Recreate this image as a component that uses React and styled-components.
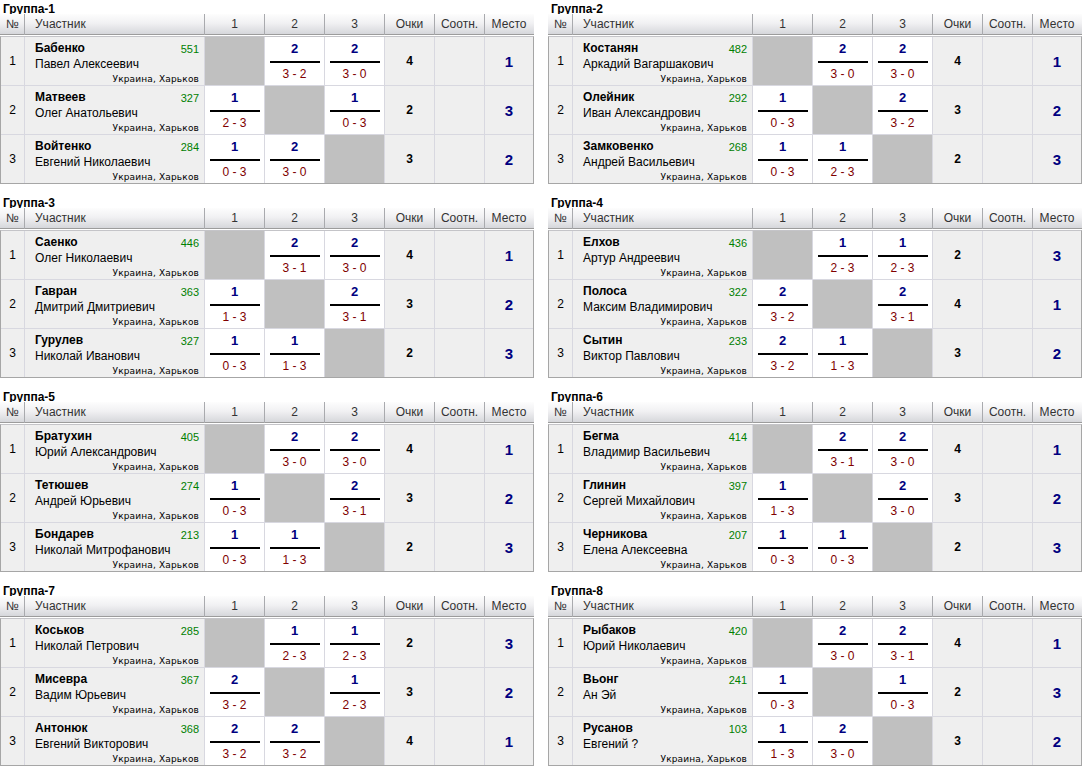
import React from 'react'
import styled, { createGlobalStyle } from 'styled-components'

const GlobalStyle = createGlobalStyle`
  body {
    margin: 0;
    background: #fff;
    font-family: "Liberation Sans", Arial, sans-serif;
    font-size: 12px;
    color: #000;
  }
`

const groups = [
  {
    title: 'Группа-1',
    rows: [
      { last: 'Бабенко', first: 'Павел Алексеевич', rating: 551, games: [null, [2, '3 - 2'], [2, '3 - 0']], points: 4, place: 1 },
      { last: 'Матвеев', first: 'Олег Анатольевич', rating: 327, games: [[1, '2 - 3'], null, [1, '0 - 3']], points: 2, place: 3 },
      { last: 'Войтенко', first: 'Евгений Николаевич', rating: 284, games: [[1, '0 - 3'], [2, '3 - 0'], null], points: 3, place: 2 },
    ],
  },
  {
    title: 'Группа-2',
    rows: [
      { last: 'Костанян', first: 'Аркадий Вагаршакович', rating: 482, games: [null, [2, '3 - 0'], [2, '3 - 0']], points: 4, place: 1 },
      { last: 'Олейник', first: 'Иван Александрович', rating: 292, games: [[1, '0 - 3'], null, [2, '3 - 2']], points: 3, place: 2 },
      { last: 'Замковенко', first: 'Андрей Васильевич', rating: 268, games: [[1, '0 - 3'], [1, '2 - 3'], null], points: 2, place: 3 },
    ],
  },
  {
    title: 'Группа-3',
    rows: [
      { last: 'Саенко', first: 'Олег Николаевич', rating: 446, games: [null, [2, '3 - 1'], [2, '3 - 0']], points: 4, place: 1 },
      { last: 'Гавран', first: 'Дмитрий Дмитриевич', rating: 363, games: [[1, '1 - 3'], null, [2, '3 - 1']], points: 3, place: 2 },
      { last: 'Гурулев', first: 'Николай Иванович', rating: 327, games: [[1, '0 - 3'], [1, '1 - 3'], null], points: 2, place: 3 },
    ],
  },
  {
    title: 'Группа-4',
    rows: [
      { last: 'Елхов', first: 'Артур Андреевич', rating: 436, games: [null, [1, '2 - 3'], [1, '2 - 3']], points: 2, place: 3 },
      { last: 'Полоса', first: 'Максим Владимирович', rating: 322, games: [[2, '3 - 2'], null, [2, '3 - 1']], points: 4, place: 1 },
      { last: 'Сытин', first: 'Виктор Павлович', rating: 233, games: [[2, '3 - 2'], [1, '1 - 3'], null], points: 3, place: 2 },
    ],
  },
  {
    title: 'Группа-5',
    rows: [
      { last: 'Братухин', first: 'Юрий Александрович', rating: 405, games: [null, [2, '3 - 0'], [2, '3 - 0']], points: 4, place: 1 },
      { last: 'Тетюшев', first: 'Андрей Юрьевич', rating: 274, games: [[1, '0 - 3'], null, [2, '3 - 1']], points: 3, place: 2 },
      { last: 'Бондарев', first: 'Николай Митрофанович', rating: 213, games: [[1, '0 - 3'], [1, '1 - 3'], null], points: 2, place: 3 },
    ],
  },
  {
    title: 'Группа-6',
    rows: [
      { last: 'Бегма', first: 'Владимир Васильевич', rating: 414, games: [null, [2, '3 - 1'], [2, '3 - 0']], points: 4, place: 1 },
      { last: 'Глинин', first: 'Сергей Михайлович', rating: 397, games: [[1, '1 - 3'], null, [2, '3 - 0']], points: 3, place: 2 },
      { last: 'Черникова', first: 'Елена Алексеевна', rating: 207, games: [[1, '0 - 3'], [1, '0 - 3'], null], points: 2, place: 3 },
    ],
  },
  {
    title: 'Группа-7',
    rows: [
      { last: 'Коськов', first: 'Николай Петрович', rating: 285, games: [null, [1, '2 - 3'], [1, '2 - 3']], points: 2, place: 3 },
      { last: 'Мисевра', first: 'Вадим Юрьевич', rating: 367, games: [[2, '3 - 2'], null, [1, '2 - 3']], points: 3, place: 2 },
      { last: 'Антонюк', first: 'Евгений Викторович', rating: 368, games: [[2, '3 - 2'], [2, '3 - 2'], null], points: 4, place: 1 },
    ],
  },
  {
    title: 'Группа-8',
    rows: [
      { last: 'Рыбаков', first: 'Юрий Николаевич', rating: 420, games: [null, [2, '3 - 0'], [2, '3 - 1']], points: 4, place: 1 },
      { last: 'Вьонг', first: 'Ан Эй', rating: 241, games: [[1, '0 - 3'], null, [1, '0 - 3']], points: 2, place: 3 },
      { last: 'Русанов', first: 'Евгений ?', rating: 103, games: [[1, '1 - 3'], [2, '3 - 0'], null], points: 3, place: 2 },
    ],
  },
]

const COLS = '24px 180px 60px 60px 60px 50px 50px 48px'

const Page = styled.div`
  display: grid;
  grid-template-columns: 534px 534px;
  column-gap: 14px;
  row-gap: 10px;
`

const Group = styled.section`
  display: flex;
  flex-direction: column;
`

const Title = styled.div`
  box-sizing: border-box;
  height: 14px;
  padding: 2px 0 0 3px;
  line-height: 14px;
  font-weight: bold;
  font-size: 12px;
`

const HeaderRow = styled.div`
  display: grid;
  grid-template-columns: ${COLS};
  height: 20px;
  padding: 0 1px;
  border-bottom: 1px solid #9c9c9c;
  background: linear-gradient(#fdfdfd, #f1f1f3 45%, #d6d7db);
  margin-bottom: 1px;
`

const HeadCell = styled.div`
  box-sizing: border-box;
  border-right: 1px solid #a9aaae;
  line-height: 21px;
  color: #333;
  text-align: ${(p) => (p.$left ? 'left' : 'center')};
  padding-left: ${(p) => (p.$left ? '10px' : '0')};
  white-space: nowrap;
  &:last-child {
    border-right: none;
  }
`

const Body = styled.div`
  border: 1px solid #a6a6a6;
  border-top-color: #c4c4c8;
`

const Row = styled.div`
  display: grid;
  grid-template-columns: ${COLS};
  height: 48px;
  border-bottom: 1px solid #d8d8e0;
  background: #efefef;
  &:last-child {
    border-bottom: none;
  }
`

const Cell = styled.div`
  box-sizing: border-box;
  border-right: 1px solid #d8d8e0;
  display: flex;
  align-items: center;
  justify-content: center;
  &:last-child {
    border-right: none;
  }
`

const NameCell = styled.div`
  box-sizing: border-box;
  border-right: 1px solid #d8d8e0;
  padding: 4px 5px 0 10px;
  display: flex;
  flex-direction: column;
`

const TopLine = styled.div`
  display: flex;
  justify-content: space-between;
  height: 14px;
`

const Surname = styled.span`
  font-weight: bold;
  line-height: 14px;
`

const Rating = styled.span`
  color: #008000;
  font-size: 11px;
  line-height: 13px;
  margin-top: 2px;
`

const FirstName = styled.div`
  line-height: 15px;
  margin-top: 2px;
`

const City = styled.div`
  font-family: "DejaVu Sans", Verdana, sans-serif;
  font-size: 9px;
  line-height: 11px;
  margin-top: 2px;
  text-align: right;
  letter-spacing: 0.15px;
`

const ScoreCell = styled.div`
  box-sizing: border-box;
  border-right: 1px solid #d8d8e0;
  background: ${(p) => (p.$self ? '#c0c0c0' : '#fff')};
  display: flex;
  flex-direction: column;
  align-items: center;
  padding-top: 5px;
`

const GamePoints = styled.div`
  color: #000080;
  font-weight: bold;
  font-size: 13px;
  line-height: 14px;
`

const Bar = styled.div`
  width: 50px;
  height: 2px;
  background: #000;
  margin: 5px 0 4px;
`

const SetScore = styled.div`
  color: #800000;
  font-size: 12px;
  line-height: 14px;
  white-space: pre;
`

const Points = styled.span`
  font-weight: bold;
`

const Place = styled.span`
  font-weight: bold;
  font-size: 15px;
  color: #000080;
`

const GroupTable = ({ title, rows }) => (
  <Group>
    <Title>{title}</Title>
    <HeaderRow>
      <HeadCell>№</HeadCell>
      <HeadCell $left>Участник</HeadCell>
      <HeadCell>1</HeadCell>
      <HeadCell>2</HeadCell>
      <HeadCell>3</HeadCell>
      <HeadCell>Очки</HeadCell>
      <HeadCell>Соотн.</HeadCell>
      <HeadCell>Место</HeadCell>
    </HeaderRow>
    <Body>
      {rows.map((r, i) => (
        <Row key={r.last}>
          <Cell>{i + 1}</Cell>
          <NameCell>
            <TopLine>
              <Surname>{r.last}</Surname>
              <Rating>{r.rating}</Rating>
            </TopLine>
            <FirstName>{r.first}</FirstName>
            <City>Украина, Харьков</City>
          </NameCell>
          {r.games.map((g, j) =>
            g ? (
              <ScoreCell key={j}>
                <GamePoints>{g[0]}</GamePoints>
                <Bar />
                <SetScore>{g[1]}</SetScore>
              </ScoreCell>
            ) : (
              <ScoreCell key={j} $self />
            )
          )}
          <Cell>
            <Points>{r.points}</Points>
          </Cell>
          <Cell />
          <Cell>
            <Place>{r.place}</Place>
          </Cell>
        </Row>
      ))}
    </Body>
  </Group>
)

export default function App() {
  return (
    <>
      <GlobalStyle />
      <Page>
        {groups.map((g) => (
          <GroupTable key={g.title} title={g.title} rows={g.rows} />
        ))}
      </Page>
    </>
  )
}
